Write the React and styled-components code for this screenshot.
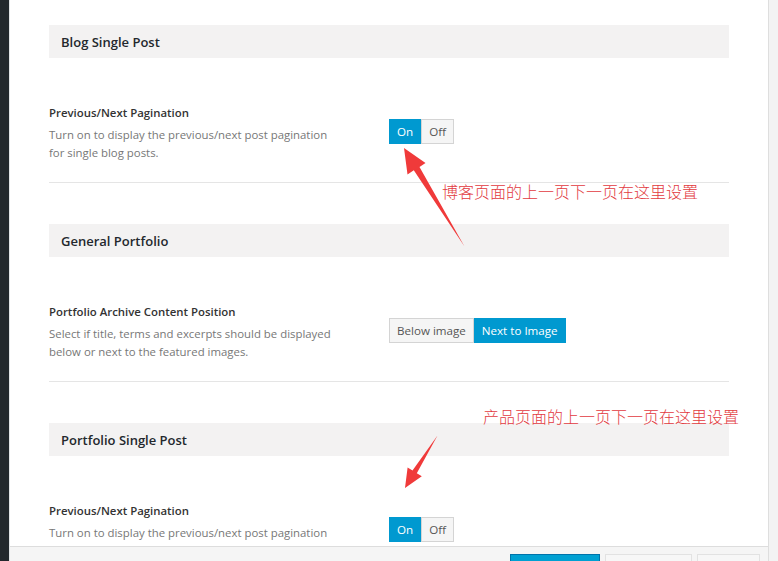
import React from "react";
import styled, { createGlobalStyle } from "styled-components";

const GlobalStyle = createGlobalStyle`
  html, body {
    margin: 0;
    padding: 0;
    background: #fff;
  }
  body {
    font-family: "Open Sans", "Noto Sans", Arial, sans-serif;
    color: #333;
  }
`;

export default function App() {
  return (
    <>
      <GlobalStyle />
      <Screen>
        <AdminBar />
        <Modal>
          <Scroll>
            <SectionHeader>Blog Single Post</SectionHeader>
            <OptionRow>
              <Info>
                <Label>Previous/Next Pagination</Label>
                <Desc>
                  Turn on to display the previous/next post pagination for
                  single blog posts.
                </Desc>
              </Info>
              <ButtonSet>
                <SetButton $active>On</SetButton>
                <SetButton>Off</SetButton>
              </ButtonSet>
            </OptionRow>

            <SectionHeader>General Portfolio</SectionHeader>
            <OptionRow>
              <Info>
                <Label>Portfolio Archive Content Position</Label>
                <Desc>
                  Select if title, terms and excerpts should be displayed below
                  or next to the featured images.
                </Desc>
              </Info>
              <ButtonSet>
                <SetButton>Below image</SetButton>
                <SetButton $active>Next to Image</SetButton>
              </ButtonSet>
            </OptionRow>

            <SectionHeader>Portfolio Single Post</SectionHeader>
            <OptionRow>
              <Info>
                <Label>Previous/Next Pagination</Label>
                <Desc>
                  Turn on to display the previous/next post pagination for
                  single portfolio posts.
                </Desc>
              </Info>
              <ButtonSet>
                <SetButton $active>On</SetButton>
                <SetButton>Off</SetButton>
              </ButtonSet>
            </OptionRow>
          </Scroll>
          <Footer>
            <FooterButton $primary $w={90} />
            <FooterButton $w={87} />
            <FooterButton $w={63} />
          </Footer>
        </Modal>
        <ScrollTrack />

        <Note $x={442} $y={180}>博客页面的上一页下一页在这里设置</Note>
        <Note $x={483} $y={405}>产品页面的上一页下一页在这里设置</Note>
        <Arrows width="778" height="561" viewBox="0 0 778 561">
          <path
            d="M404 148 L425.5 163 L419.5 167 L464.5 246.5 L413.8 170.2 L407.5 174.5 Z"
            fill="#f03a3a"
          />
          <path
            d="M405 488 L407.6 467.4 L412.5 470.6 L437.5 435.5 L416.8 473.2 L421.8 476.2 Z"
            fill="#f03a3a"
          />
        </Arrows>
      </Screen>
    </>
  );
}

const Screen = styled.div`
  position: relative;
  width: 778px;
  height: 561px;
  display: flex;
  overflow: hidden;
`;

const AdminBar = styled.div`
  width: 9px;
  flex-shrink: 0;
  background: #23282d;
  border-right: 1px solid #e2e4e7;
`;

const Modal = styled.div`
  flex: 1;
  display: flex;
  flex-direction: column;
  min-width: 0;
`;

const Scroll = styled.div`
  flex: 1;
  overflow: hidden;
  padding: 25px 39px 0;
`;

const ScrollTrack = styled.div`
  width: 9px;
  flex-shrink: 0;
  background: #f3f3f3;
  border-left: 1px solid #dedede;
`;

const SectionHeader = styled.h3`
  margin: 0;
  height: 33px;
  display: flex;
  align-items: center;
  padding: 0 12px;
  background: #f3f2f2;
  color: #23282d;
  font-size: 13px;
  font-weight: 600;
`;

const OptionRow = styled.div`
  display: flex;
  align-items: center;
  padding: 46px 0 20px;
  margin-bottom: 41px;
  border-bottom: 1px solid #e5e5e5;
`;

const Info = styled.div`
  width: 340px;
  flex-shrink: 0;
`;

const Label = styled.div`
  font-size: 11.4px;
  font-weight: 600;
  line-height: 18px;
  color: #333;
  margin-bottom: 4px;
`;

const Desc = styled.p`
  margin: 0;
  width: 290px;
  font-size: 11.4px;
  line-height: 18px;
  color: #777;
`;

const ButtonSet = styled.div`
  display: flex;
  margin-top: -3px;
`;

const SetButton = styled.span`
  height: 25px;
  box-sizing: border-box;
  display: flex;
  align-items: center;
  padding: 0 7px;
  font-size: 11.6px;
  color: ${(p) => (p.$active ? "#fff" : "#555")};
  background: ${(p) => (p.$active ? "#0099d0" : "#f5f5f5")};
  border: 1px solid ${(p) => (p.$active ? "#0099d0" : "#d4d4d4")};
`;

const Footer = styled.div`
  height: 14px;
  flex-shrink: 0;
  background: #f5f5f5;
  border-top: 1px solid #dddddd;
  display: flex;
  align-items: flex-end;
  justify-content: flex-end;
  gap: 5px;
  padding-right: 8px;
`;

const FooterButton = styled.div`
  width: ${(p) => p.$w}px;
  height: 7px;
  box-sizing: border-box;
  background: ${(p) => (p.$primary ? "#00a0d2" : "#f7f7f7")};
  border: 1px solid ${(p) => (p.$primary ? "#0073aa" : "#e2e2e2")};
  border-bottom: none;
`;

const Note = styled.div`
  position: absolute;
  left: ${(p) => p.$x}px;
  top: ${(p) => p.$y}px;
  font-family: "Noto Sans CJK SC", sans-serif;
  font-size: 16px;
  font-weight: 300;
  line-height: 22px;
  color: #e23a40;
  white-space: nowrap;
`;

const Arrows = styled.svg`
  position: absolute;
  left: 0;
  top: 0;
  pointer-events: none;
`;
